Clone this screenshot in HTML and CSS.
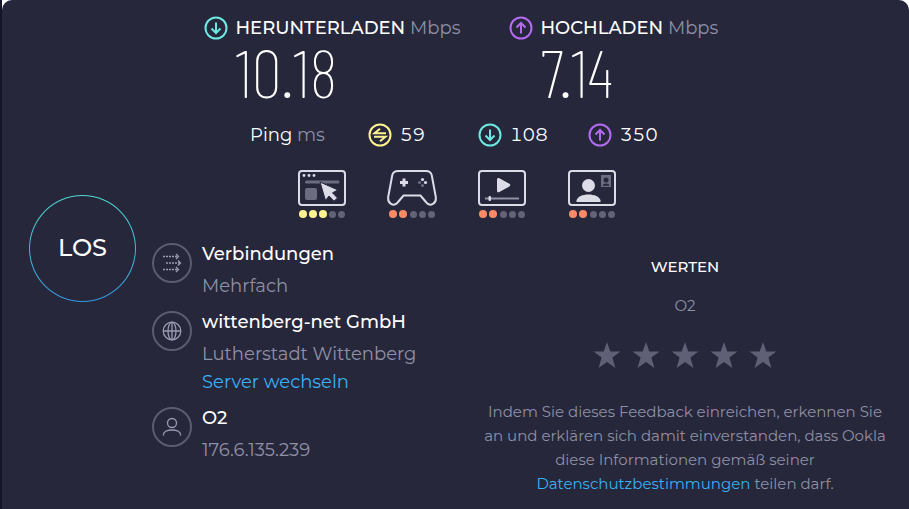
FILE: index.html
```
<!DOCTYPE html>
<html lang="de">
<head>
  <meta charset="UTF-8" />
  <meta name="viewport" content="width=device-width, initial-scale=1.0" />
  <title>Speedtest</title>
  <link rel="stylesheet" href="styles.css">
</head>
<body>
  <!-- shared icons -->
  <svg class="sprite" aria-hidden="true">
    <symbol id="icon-down" viewBox="0 0 24 24">
      <circle cx="12" cy="12" r="10.5" />
      <path d="M12 6.500v10.500M7.500 12.500l4.500 4.500 4.500-4.500" />
    </symbol>
    <symbol id="icon-up" viewBox="0 0 24 24">
      <circle cx="12" cy="12" r="10.5" />
      <path d="M12 17.500V7M7.500 11.500L12 7l4.500 4.500" />
    </symbol>
    <symbol id="icon-ping" viewBox="0 0 24 24">
      <circle cx="12" cy="12" r="10.5" />
      <path d="M18 10.300H6.500l5.500-4.600M6 13.700h11.500l-5.500 4.600" />
    </symbol>
    <symbol id="icon-star" viewBox="0 0 28 28">
      <path d="M14 1l3.300 9.500H27.500l-8.100 6.100 3 10.400L14 20.900 5.600 27l3-10.400L.5 10.500h10.200z" />
    </symbol>
  </svg>

  <main class="panel">
    <button class="go-btn" type="button">LOS</button>

    <section class="results">
      <div class="speeds">
        <div class="speed">
          <svg class="icon down"><use href="#icon-down" /></svg>
          <h2>HERUNTERLADEN <span>Mbps</span></h2>
          <p class="value">10.18</p>
        </div>
        <div class="speed">
          <svg class="icon up"><use href="#icon-up" /></svg>
          <h2>HOCHLADEN <span>Mbps</span></h2>
          <p class="value">7.14</p>
        </div>
      </div>

      <div class="pings">
        <p class="ping-label">Ping <span>ms</span></p>
        <p class="ping"><svg class="icon idle"><use href="#icon-ping" /></svg>59</p>
        <p class="ping"><svg class="icon down"><use href="#icon-down" /></svg>108</p>
        <p class="ping"><svg class="icon up"><use href="#icon-up" /></svg>350</p>
      </div>

      <div class="scores">
        <div class="score good">
          <svg viewBox="0 0 50 36" role="img" aria-label="Surfen">
            <rect class="line" x="2" y="1" width="46" height="34" rx="3" />
            <g class="fill"><circle cx="7" cy="5.500" r="1.400" /><circle cx="12" cy="5.500" r="1.400" /><circle cx="17" cy="5.500" r="1.400" /></g>
            <path class="dim-line" d="M9.500 12H41" />
            <rect class="dim" x="8" y="18" width="12" height="12" rx="2" />
            <path class="fill cursor" d="M23 12l18 8-5.500 2.800 5 5.200-3.500 3.200-5-5.200-3.500 4.500z" />
          </svg>
          <div class="dots"><i class="on"></i><i class="on"></i><i class="on"></i><i></i><i></i></div>
        </div>
        <div class="score poor">
          <svg viewBox="0 0 50 36" role="img" aria-label="Gaming">
            <path class="line" d="M11 1h28c3 0 5 1.500 5.700 4l4.100 22c.8 7-5.500 9.500-9 6l-6.300-7.500h-17L10.200 33c-3.500 3.500-9.800 1-9-6L5.300 5C6 2.500 8 1 11 1z" />
            <path class="plus" d="M17 8.500v8M13 12.500h8" />
            <g class="fill"><circle cx="35.500" cy="9.500" r="1.600" /><circle cx="38.500" cy="12.500" r="1.600" /></g>
            <g class="dim"><circle cx="32.500" cy="12.500" r="1.600" /><circle cx="35.500" cy="15.500" r="1.600" /></g>
          </svg>
          <div class="dots"><i class="on"></i><i class="on"></i><i></i><i></i><i></i></div>
        </div>
        <div class="score poor">
          <svg viewBox="0 0 50 36" role="img" aria-label="Video">
            <rect class="line" x="2" y="1" width="46" height="34" rx="3" />
            <path class="fill" d="M20 9.500c0-1.500 1.200-2 2.400-1.300l10 5.600c1.200.7 1.200 1.900 0 2.600l-10 5.600c-1.200.7-2.400 0-2.400-1.300z" />
            <path class="track" d="M8 28.500h34" />
            <rect class="fill" x="11.500" y="26" width="2.500" height="5" rx="1" />
          </svg>
          <div class="dots"><i class="on"></i><i class="on"></i><i></i><i></i><i></i></div>
        </div>
        <div class="score poor">
          <svg viewBox="0 0 50 36" role="img" aria-label="Videochat">
            <rect class="line" x="2" y="1" width="46" height="34" rx="3" />
            <circle class="fill" cx="21.500" cy="15.500" r="6.500" />
            <path class="fill" d="M9.500 32v-1.500c1-4 6-6 12-6s11 2 12 6V32z" />
            <rect class="dim" x="34" y="5" width="10" height="12" />
            <circle class="hole" cx="39" cy="10" r="2.500" />
            <path class="hole" d="M35.500 15.800c.5-3 6.500-3 7 0z" />
          </svg>
          <div class="dots"><i class="on"></i><i class="on"></i><i></i><i></i><i></i></div>
        </div>
      </div>
    </section>

    <section class="details">
      <div class="detail">
        <svg class="badge" viewBox="0 0 40 40">
          <circle class="ring" cx="20" cy="20" r="19" />
          <path class="dash" d="M11 13.500h15M14 20h14M11 26.500h15" />
          <path class="glyph" d="M24 11l2.500 2.500-2.500 2.500M26 17.500l2.500 2.500-2.500 2.500M24 24l2.500 2.500-2.500 2.500" />
        </svg>
        <div>
          <h3>Verbindungen</h3>
          <p>Mehrfach</p>
        </div>
      </div>
      <div class="detail">
        <svg class="badge" viewBox="0 0 40 40">
          <circle class="ring" cx="20" cy="20" r="19" />
          <circle class="glyph" cx="20" cy="20" r="8.800" />
          <ellipse class="glyph" cx="20" cy="20" rx="4" ry="8.800" />
          <path class="glyph" d="M11.200 20h17.600M20 11.200v17.600" />
        </svg>
        <div>
          <h3>wittenberg-net GmbH</h3>
          <p>Lutherstadt Wittenberg</p>
          <a href="#">Server wechseln</a>
        </div>
      </div>
      <div class="detail">
        <svg class="badge" viewBox="0 0 40 40">
          <circle class="ring" cx="20" cy="20" r="19" />
          <circle class="glyph" cx="20" cy="16" r="4.500" />
          <path class="glyph" d="M11.500 28.500v-1c0-6 17-6 17 0v1" />
        </svg>
        <div>
          <h3>O2</h3>
          <p>176.6.135.239</p>
        </div>
      </div>
    </section>

    <section class="rating">
      <h3>WERTEN</h3>
      <p>O2</p>
      <div class="stars">
        <button type="button" aria-label="1 Stern"><svg><use href="#icon-star" /></svg></button>
        <button type="button" aria-label="2 Sterne"><svg><use href="#icon-star" /></svg></button>
        <button type="button" aria-label="3 Sterne"><svg><use href="#icon-star" /></svg></button>
        <button type="button" aria-label="4 Sterne"><svg><use href="#icon-star" /></svg></button>
        <button type="button" aria-label="5 Sterne"><svg><use href="#icon-star" /></svg></button>
      </div>
      <p>Indem Sie dieses Feedback einreichen, erkennen Sie an und erklären sich damit einverstanden, dass Ookla diese Informationen gemäß seiner <a href="#">Datenschutzbestimmungen</a> teilen darf.</p>
    </section>
  </main>
</body>
</html>
```
FILE: styles.css
```
* {
  box-sizing: border-box;
}
body {
  margin: 0;
  min-height: 100vh;
  display: flex;
  border-left: 2px solid #141529;
  background: #fff;
  color: #fff;
  font-family: Montserrat, Inter, sans-serif;
  font-size: 18px;
  line-height: 24px;
}
h2, h3, p {
  margin: 0;
  font-size: inherit;
  font-weight: 500;
}
p {
  font-weight: 400;
}
a {
  color: #38b1f5;
  text-decoration: none;
}
button {
  padding: 0;
  border: none;
  background: none;
  color: inherit;
  font: inherit;
  cursor: pointer;
}
svg {
  display: block;
  flex: none;
}
.sprite {
  position: absolute;
  width: 0;
  height: 0;
}
.panel {
  flex: 1;
  display: grid;
  grid-template-columns: 107px 1fr 404px;
  grid-template-rows: auto 1fr;
  column-gap: 16px;
  row-gap: 24px;
  padding: 16px 22px 16px 27px;
  background: #26273b;
  border-radius: 10px 10px 0 0;
}

/* start button */
.go-btn {
  grid-column: 1;
  grid-row: 1 / 3;
  align-self: center;
  width: 107px;
  height: 107px;
  margin-bottom: 16px;
  border: 1px solid transparent;
  border-radius: 50%;
  background: linear-gradient(#26273b, #26273b) padding-box, linear-gradient(#4fd8cc, #3597e0) border-box;
  font-size: 24px;
  font-weight: 500;
  z-index: 1;
}

/* speeds, pings and scores */
.results {
  grid-column: 1 / -1;
  grid-row: 1;
}
.speeds {
  display: grid;
  grid-template-columns: 250px 202px;
  column-gap: 55px;
  justify-content: center;
  padding-right: 2px;
}
.speed {
  display: grid;
  grid-template-columns: 24px 1fr;
  column-gap: 8px;
}
.speed h2 {
  white-space: nowrap;
}
.speed span, .ping-label span {
  color: #8f90a6;
  font-weight: 400;
}
.value {
  grid-column: 2;
  padding-bottom: 6px;
  font-family: "Barlow Condensed", "Roboto Condensed", Roboto, sans-serif;
  font-size: 68px;
  font-weight: 200;
  line-height: 62px;
}
.icon {
  width: 24px;
  height: 24px;
  fill: none;
  stroke: currentColor;
  stroke-width: 2;
}
.down {
  color: #6ce8e0;
}
.up {
  color: #b36bf0;
}
.idle {
  color: #fff38e;
}
.pings {
  display: grid;
  grid-template-columns: 110px 102px 102px 78px;
  column-gap: 8px;
  justify-content: center;
  margin-top: 15px;
}
.ping {
  display: flex;
  gap: 8px;
  font-variant-numeric: tabular-nums;
}
.scores {
  display: flex;
  justify-content: center;
  gap: 40px;
  margin-top: 23px;
  padding-right: 2px;
}
.score {
  width: 50px;
}
.score svg {
  width: 50px;
  height: 36px;
}
.line {
  fill: none;
  stroke: #dcdce8;
  stroke-width: 2;
}
.fill {
  fill: #dcdce8;
}
.plus {
  stroke: #dcdce8;
  stroke-width: 3;
}
.cursor {
  stroke: #26273b;
  stroke-width: 1;
}
.dim {
  fill: #6b6c80;
}
.dim-line {
  stroke: #6b6c80;
  stroke-width: 3;
  stroke-linecap: round;
}
.track {
  stroke: #8f90a6;
  stroke-width: 2;
}
.hole {
  fill: #26273b;
}
.dots {
  display: flex;
  align-items: center;
  justify-content: space-between;
  padding: 4px 2px 0;
  height: 12px;
}
.dots i {
  width: 7px;
  height: 7px;
  border-radius: 50%;
  background: #626377;
}
.dots .on {
  width: 8px;
  height: 8px;
}
.good .on {
  background: #fff38e;
}
.poor .on {
  background: #ff8a66;
}

/* connection details */
.details {
  grid-column: 2;
  display: flex;
  flex-direction: column;
  gap: 12px;
}
.detail {
  display: flex;
  gap: 10px;
}
.detail p {
  margin-top: 8px;
  color: #8f90a6;
}
.detail a {
  display: block;
  margin-top: 4px;
}
.badge {
  width: 40px;
  height: 40px;
  margin-top: 1px;
  fill: none;
}
.ring {
  stroke: #5b5c70;
  stroke-width: 2;
}
.glyph {
  stroke: #9b9cb2;
  stroke-width: 1.3;
}
.dash {
  stroke: #9b9cb2;
  stroke-width: 1.3;
  stroke-dasharray: 2 1;
}

/* provider rating */
.rating {
  grid-column: 3;
  padding-top: 13px;
  color: #8f90a6;
  font-size: 15px;
  text-align: center;
}
.rating h3 {
  margin-bottom: 15px;
  color: #fff;
}
.stars {
  display: flex;
  justify-content: center;
  gap: 11px;
  margin: 23px 0 31px;
}
.stars svg {
  width: 28px;
  height: 28px;
  fill: #5f6075;
}
```
